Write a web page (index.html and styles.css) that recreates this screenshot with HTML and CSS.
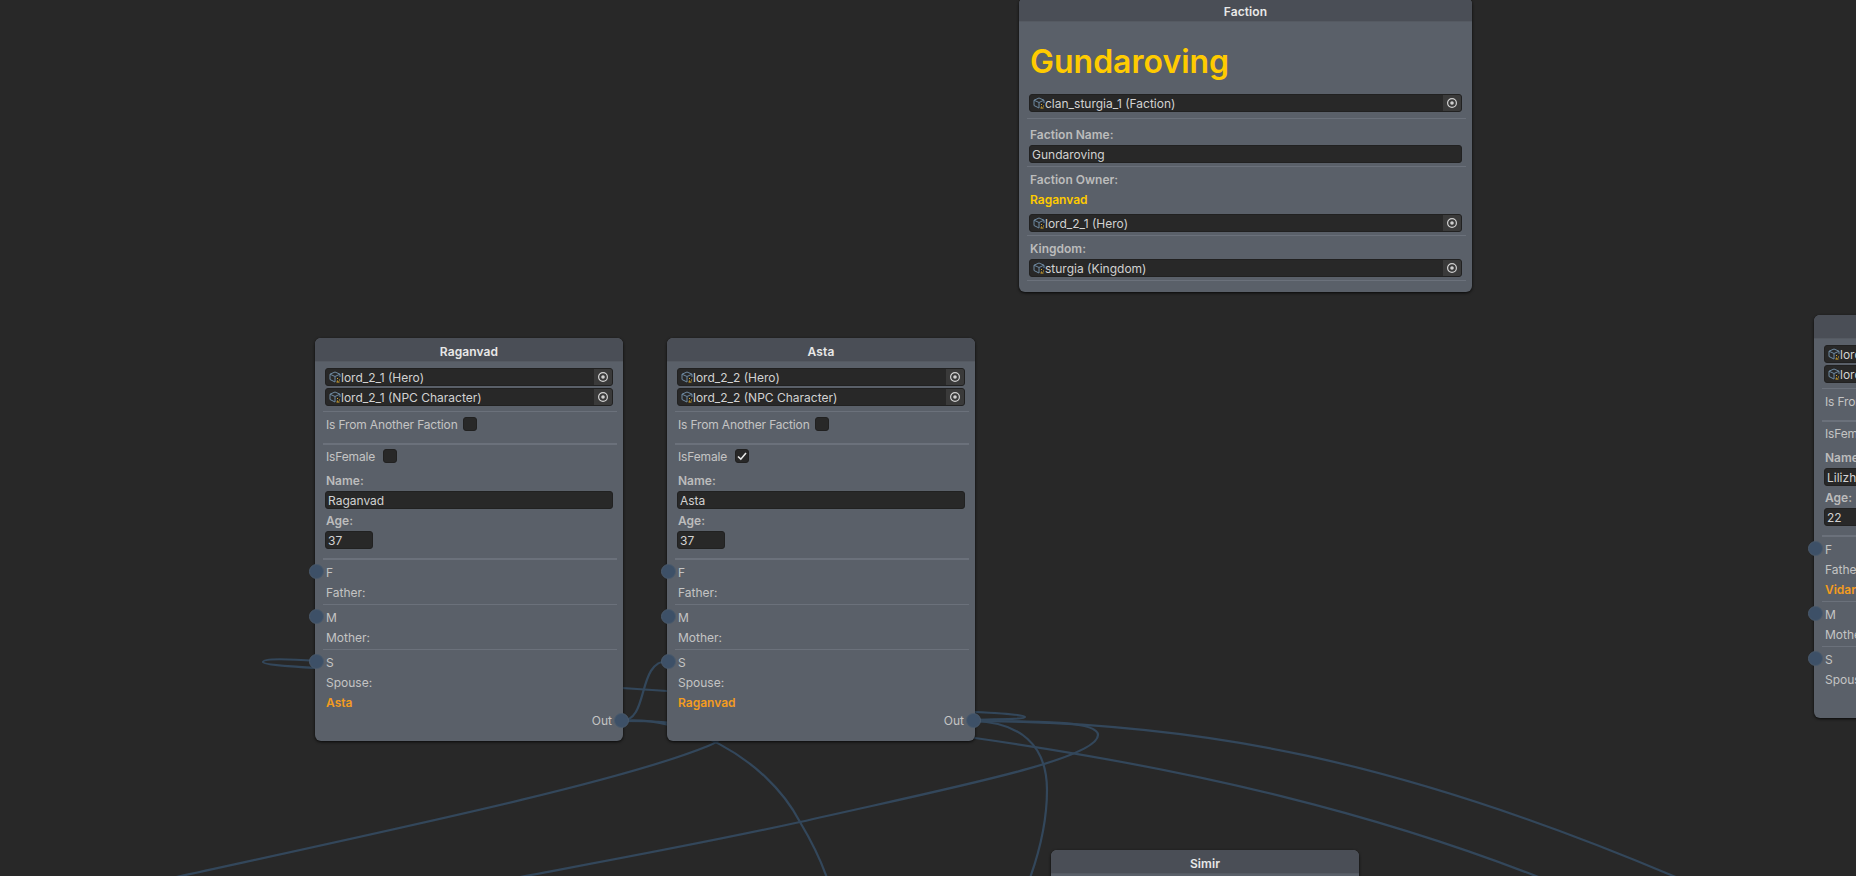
FILE: index.html
```html
<!doctype html>
<html>
	<head>
		<meta charset="utf-8">
		<title>Faction graph</title>
		<link rel="stylesheet" href="styles.css">
	</head>
	<body>
		<svg class="wires" width="1856" height="876" viewBox="0 0 1856 876">
			<path d="M317 661 C290 659 263 658 263 662 C263 665 300 667 317 668 C420 674 560 684 667 691 C800 705 900 728 975 738 C1200 770 1380 815 1541 878"/>
			<path d="M621 721 C650 721 636 661 668 661"/>
			<path d="M621 721 C680 721 752 728 708 746 C620 782 400 828 172 878"/>
			<path d="M621 721 C680 715 765 755 800 822 C812 842 820 858 827 878"/>
			<path d="M973 721 C1050 721 1098 722 1098 735 C1098 760 940 790 800 822 C700 844 600 862 515 878"/>
			<path d="M973 721 C1020 722 1047 745 1047 790 C1047 820 1040 850 1030 878"/>
			<path d="M975 712 C1000 713 1025 715 1025 717 C1025 719 1000 719 973 720"/>
			<path d="M973 721 C1200 722 1400 760 1678 878"/>
		</svg>

		<svg width="0" height="0" class="defs">
			<symbol id="cube" viewBox="0 0 12 12">
				<path d="M6 1 L11 3.2 L11 6 M6 1 L1 3.2 L1 8.5 L6 11 M1 3.2 L6 5.5 L11 3.2 M6 5.5 L6 11" fill="none" stroke="#6f8ba3" stroke-width="1"/>
				<path d="M8 7.5h1M10 9h1M8 10h1M7.5 11h3" fill="none" stroke="#d9a92c" stroke-width="1"/>
			</symbol>
			<symbol id="target" viewBox="0 0 12 12">
				<circle cx="6" cy="6" r="4.4" fill="none" stroke="#d0d0d0" stroke-width="1.2"/>
				<circle cx="6" cy="6" r="1.8" fill="#d0d0d0"/>
			</symbol>
		</svg>

		<section class="node node-faction">
			<header>Faction</header>
			<div class="body">
				<h1>Gundaroving</h1>
				<div class="field object"><svg class="cube"><use href="#cube"/></svg><span>clan_sturgia_1 (Faction)</span><i><svg class="target"><use href="#target"/></svg></i></div>
				<hr class="sep sep-first">
				<div class="line bold gap-8">Faction Name:</div>
				<div class="field">Gundaroving</div>
				<hr class="sep">
				<div class="line bold gap-4">Faction Owner:</div>
				<div class="line bold gold">Raganvad</div>
				<div class="field object gap-5"><svg class="cube"><use href="#cube"/></svg><span>lord_2_1 (Hero)</span><i><svg class="target"><use href="#target"/></svg></i></div>
				<hr class="sep">
				<div class="line bold gap-4">Kingdom:</div>
				<div class="field object"><svg class="cube"><use href="#cube"/></svg><span>sturgia (Kingdom)</span><i><svg class="target"><use href="#target"/></svg></i></div>
				<hr class="sep">
			</div>
		</section>

		<section class="node node-raganvad">
			<header>Raganvad</header>
			<div class="body">
				<div class="field object"><svg class="cube"><use href="#cube"/></svg><span>lord_2_1 (Hero)</span><i><svg class="target"><use href="#target"/></svg></i></div>
				<div class="field object next"><svg class="cube"><use href="#cube"/></svg><span>lord_2_1 (NPC Character)</span><i><svg class="target"><use href="#target"/></svg></i></div>
				<hr class="sep sep-first">
				<div class="check-row"><span>Is From Another Faction</span><b class="check"></b></div>
				<hr class="sep thick">
				<div class="check-row"><span>IsFemale</span><b class="check check-female"></b></div>
				<div class="line bold gap-6">Name:</div>
				<div class="field">Raganvad</div>
				<div class="line bold">Age:</div>
				<div class="field age">37</div>
				<hr class="sep thick sep-pins">
				<div class="line pin"><em class="port"></em>F</div>
				<div class="line">Father:</div>
				<hr class="sep">
				<div class="line pin"><em class="port"></em>M</div>
				<div class="line">Mother:</div>
				<hr class="sep">
				<div class="line pin"><em class="port"></em>S</div>
				<div class="line">Spouse:</div>
				<div class="line bold orange">Asta</div>
				<div class="line out">Out<em class="port"></em></div>
			</div>
		</section>

		<section class="node node-asta">
			<header>Asta</header>
			<div class="body">
				<div class="field object"><svg class="cube"><use href="#cube"/></svg><span>lord_2_2 (Hero)</span><i><svg class="target"><use href="#target"/></svg></i></div>
				<div class="field object next"><svg class="cube"><use href="#cube"/></svg><span>lord_2_2 (NPC Character)</span><i><svg class="target"><use href="#target"/></svg></i></div>
				<hr class="sep sep-first">
				<div class="check-row"><span>Is From Another Faction</span><b class="check"></b></div>
				<hr class="sep thick">
				<div class="check-row"><span>IsFemale</span><b class="check check-female"><svg width="12" height="12" viewBox="0 0 12 12"><path d="M2 6.5 L4.8 9.2 L10 3" fill="none" stroke="#e8e8e8" stroke-width="1.6"/></svg></b></div>
				<div class="line bold gap-6">Name:</div>
				<div class="field">Asta</div>
				<div class="line bold">Age:</div>
				<div class="field age">37</div>
				<hr class="sep thick sep-pins">
				<div class="line pin"><em class="port"></em>F</div>
				<div class="line">Father:</div>
				<hr class="sep">
				<div class="line pin"><em class="port"></em>M</div>
				<div class="line">Mother:</div>
				<hr class="sep">
				<div class="line pin"><em class="port"></em>S</div>
				<div class="line">Spouse:</div>
				<div class="line bold orange">Raganvad</div>
				<div class="line out">Out<em class="port"></em></div>
			</div>
		</section>

		<section class="node node-lilizh">
			<header>Lilizh</header>
			<div class="body">
				<div class="field object"><svg class="cube"><use href="#cube"/></svg><span>lord_2_3 (Hero)</span><i><svg class="target"><use href="#target"/></svg></i></div>
				<div class="field object next"><svg class="cube"><use href="#cube"/></svg><span>lord_2_3 (NPC Character)</span><i><svg class="target"><use href="#target"/></svg></i></div>
				<hr class="sep sep-first">
				<div class="check-row"><span>Is From Another Faction</span><b class="check"></b></div>
				<hr class="sep thick">
				<div class="check-row"><span>IsFemale</span><b class="check check-female"></b></div>
				<div class="line bold gap-6">Name:</div>
				<div class="field">Lilizh</div>
				<div class="line bold">Age:</div>
				<div class="field age">22</div>
				<hr class="sep thick sep-pins">
				<div class="line pin"><em class="port"></em>F</div>
				<div class="line">Father:</div>
				<div class="line bold orange">Vidar</div>
				<hr class="sep">
				<div class="line pin"><em class="port"></em>M</div>
				<div class="line">Mother:</div>
				<hr class="sep">
				<div class="line pin"><em class="port"></em>S</div>
				<div class="line">Spouse:</div>
				<div class="line out">Out<em class="port"></em></div>
			</div>
		</section>

		<section class="node node-simir">
			<header>Simir</header>
			<div class="body"></div>
		</section>
	</body>
</html>
```

FILE: styles.css
```css
*{padding:0px;margin:0px;box-sizing:border-box;}
html,body{
	height:100%;
	overflow:hidden;
}
body{
	position:relative;
	background:#282828;
	color:#c4c4c4;
	font-family:Inter,"Liberation Sans",sans-serif;
	font-size:12px;
}
.defs{
	position:absolute;
}
.wires{
	position:absolute;
	left:0px;
	top:0px;
}
.wires path{
	fill:none;
	stroke:#33475b;
	stroke-width:2.2;
}

/* nodes sit on a free canvas */
.node{
	position:absolute;
	width:308px;
	background:#5a6069;
	border-radius:6px;
	box-shadow:0px 1px 3px rgba(0,0,0,0.8);
}
.node-faction{left:1019px;top:-2px;width:453px;}
.node-raganvad{left:315px;top:338px;}
.node-asta{left:667px;top:338px;}
.node-lilizh{left:1814px;top:315px;}
.node-simir{left:1051px;top:850px;height:60px;}

.node header{
	height:24px;
	line-height:27px;
	text-align:center;
	font-weight:600;
	letter-spacing:0.1px;
	color:#e8e8e8;
	background:#4a4e56;
	border-radius:6px 6px 0px 0px;
	border-bottom:1px solid #555a62;
}
.body{
	padding:6px 6px 12px 8px;
}
.node-faction .body{
	padding-top:0px;
	padding-bottom:8px;
}
h1{
	height:48px;
	margin:16px 0px 8px 3px;
	line-height:48px;
	font-size:32px;
	font-weight:600;
	color:#ffcb00;
}

.field{
	height:18px;
	line-height:18px;
	margin:1px 4px 0px 2px;
	padding-left:2px;
	background:#282828;
	border:1px solid #212121;
	border-radius:3px;
	color:#d2d2d2;
	overflow:hidden;
	white-space:nowrap;
}
.field.next{margin-top:2px;}
.field.gap-5{margin-top:5px;}
.node-faction h1 + .field,
.node-raganvad .body > .field:first-child,
.node-asta .body > .field:first-child,
.node-lilizh .body > .field:first-child{margin-top:0px;}
.field.age{width:48px;}
.object{
	display:flex;
	align-items:center;
	padding-left:3px;
}
.object span{
	flex:1;
	padding-top:1px;
	line-height:15px;
}
.object i{
	display:flex;
	align-items:center;
	justify-content:center;
	width:18px;
	height:16px;
	background:#3a3a3a;
}
.cube{
	width:12px;
	height:12px;
}
.target{
	width:12px;
	height:12px;
}

.sep{
	height:1px;
	margin:3px 0px;
	border:none;
	background:#6b717b;
}
.sep-first{
	margin-top:5px;
	margin-bottom:2px;
}
.node-faction .sep-first{margin-top:6px;}
.sep.thick{
	height:2px;
	margin-top:9px;
	margin-bottom:1px;
}
.sep.sep-pins{margin-bottom:3px;}

.check-row{
	display:flex;
	align-items:center;
	height:20px;
	padding-left:3px;
	letter-spacing:-0.15px;
}
.check{
	display:flex;
	align-items:center;
	justify-content:center;
	width:14px;
	height:14px;
	margin-left:5px;
	background:#282828;
	border:1px solid #212121;
	border-radius:3px;
}
.check-female{margin-left:8px;}

.line{
	position:relative;
	height:18px;
	line-height:20px;
	margin-top:2px;
	padding-left:3px;
	white-space:nowrap;
}
.bold{
	margin-top:3px;
	line-height:18px;
	font-weight:600;
	color:#bcbcbc;
}
.orange{
	margin-top:2px;
	line-height:20px;
	color:#f39c1f;
}
.gold{
	margin-top:2px;
	color:#ffcb00;
}
.gap-4{margin-top:4px;}
.gap-6{margin-top:6px;}
.gap-8{margin-top:7px;}
.sep + .line{margin-top:3px;}
.sep + .gap-4{margin-top:4px;}
.sep + .gap-8{margin-top:7px;}

.out{
	margin-top:0px;
	padding-right:5px;
	text-align:right;
}
.port{
	position:absolute;
	left:-14px;
	top:1px;
	width:15px;
	height:15px;
	background:#3d5067;
	border:1px solid #4a5a6c;
	border-radius:50%;
}
.out .port{
	left:auto;
	right:-12px;
	top:2px;
}
```
